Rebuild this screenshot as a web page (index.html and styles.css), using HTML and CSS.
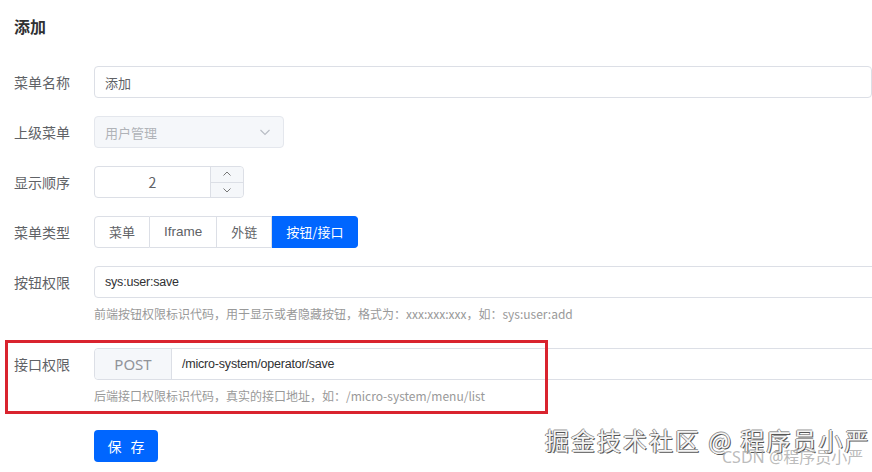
FILE: index.html
```html
<!DOCTYPE html>
<html lang="zh-CN">
<head>
    <meta charset="UTF-8">
    <title>添加</title>
    <link rel="stylesheet" href="styles.css">
</head>
<body>
    <div class="page">
        <h2 class="title">添加</h2>

        <form class="form">
            <div class="form-item">
                <label class="label">菜单名称</label>
                <div class="input wide"><span class="value">添加</span></div>
            </div>

            <div class="form-item">
                <label class="label">上级菜单</label>
                <div class="input select disabled">
                    <span class="value">用户管理</span>
                    <svg class="arrow" width="12" height="12" viewBox="0 0 12 12"><path d="M1.5 4 L6 8.5 L10.5 4" fill="none" stroke="#b8bcc4" stroke-width="1.1"/></svg>
                </div>
            </div>

            <div class="form-item">
                <label class="label">显示顺序</label>
                <div class="input number">
                    <span class="value">2</span>
                    <div class="spin">
                        <span class="spin-btn"><svg width="10" height="10" viewBox="0 0 10 10"><path d="M1.5 6.5 L5 3 L8.5 6.5" fill="none" stroke="#777" stroke-width="1"/></svg></span>
                        <span class="spin-btn"><svg width="10" height="10" viewBox="0 0 10 10"><path d="M1.5 3.5 L5 7 L8.5 3.5" fill="none" stroke="#777" stroke-width="1"/></svg></span>
                    </div>
                </div>
            </div>

            <div class="form-item">
                <label class="label">菜单类型</label>
                <div class="radio-group">
                    <span class="radio">菜单</span>
                    <span class="radio latin-radio">Iframe</span>
                    <span class="radio">外链</span>
                    <span class="radio active">按钮/接口</span>
                </div>
            </div>

            <div class="form-item has-help">
                <label class="label">按钮权限</label>
                <div class="field">
                    <div class="input wide"><span class="value latin">sys:user:save</span></div>
                    <div class="help">前端按钮权限标识代码，用于显示或者隐藏按钮，格式为：xxx:xxx:xxx，如：sys:user:add</div>
                </div>
            </div>

            <div class="form-item has-help marked">
                <label class="label">接口权限</label>
                <div class="field">
                    <div class="input wide group">
                        <span class="prepend">POST</span>
                        <span class="value latin">/micro-system/operator/save</span>
                    </div>
                    <div class="help">后端接口权限标识代码，真实的接口地址，如：/micro-system/menu/list</div>
                </div>
                <div class="mark"></div>
            </div>

            <div class="form-item">
                <span class="label"></span>
                <button type="button" class="btn-primary">保 存</button>
            </div>
        </form>

        <div class="watermark">掘金技术社区 @ 程序员小严</div>
        <div class="watermark-small">CSDN @程序员小严</div>
    </div>
</body>
</html>
```

FILE: styles.css
```css
body {
    margin: 0;
    background: #fff;
    font-family: "Noto Sans CJK SC", "Noto Sans", sans-serif;
    overflow: hidden;
}
.page {
    position: relative;
    width: 872px;
    height: 472px;
    padding: 14px 0 0 14px;
    box-sizing: border-box;
}
.title {
    margin: 0;
    font-size: 16px;
    line-height: 24px;
    font-weight: bold;
    color: #303133;
}
.form {
    margin-top: 28px;
}
.form-item {
    position: relative;
    display: flex;
    align-items: flex-start;
    margin-bottom: 18px;
}
.label {
    width: 80px;
    flex: none;
    font-size: 14px;
    line-height: 32px;
    color: #606266;
}
.field {
    display: flex;
    flex-direction: column;
}
.input {
    display: flex;
    align-items: center;
    height: 32px;
    box-sizing: border-box;
    border: 1px solid #dcdfe6;
    border-radius: 4px;
    background: #fff;
    font-size: 13px;
    color: #606266;
}
.input .value {
    padding: 0 10px;
}
.latin {
    font-family: "Liberation Sans", "Noto Sans CJK SC", sans-serif;
    font-size: 12.5px;
    letter-spacing: -0.2px;
    color: #303133;
}
.wide {
    width: 800px;
}
.select {
    width: 190px;
    justify-content: space-between;
}
.disabled {
    background: #f5f7fa;
    border-color: #e4e7ed;
    color: #b0b3b8;
}
.arrow {
    margin-right: 12px;
}
.number {
    width: 150px;
    justify-content: space-between;
}
.number .value {
    flex: 1;
    text-align: center;
    font-size: 14px;
    color: #606266;
}
.spin {
    display: flex;
    flex-direction: column;
    width: 32px;
    height: 100%;
    border-left: 1px solid #dcdfe6;
    background: #f5f7fa;
    border-radius: 0 4px 4px 0;
}
.spin-btn {
    flex: 1;
    display: flex;
    align-items: center;
    justify-content: center;
}
.spin-btn + .spin-btn {
    border-top: 1px solid #dcdfe6;
}
.radio-group {
    display: flex;
}
.radio {
    height: 30px;
    line-height: 30px;
    padding: 0 14px;
    border: 1px solid #dcdfe6;
    border-left: none;
    font-size: 13px;
    color: #606266;
}
.latin-radio {
    font-family: "Liberation Sans", sans-serif;
    font-size: 13.5px;
}
.radio:first-child {
    border-left: 1px solid #dcdfe6;
    border-radius: 4px 0 0 4px;
}
.radio:last-child {
    border-radius: 0 4px 4px 0;
}
.radio.active {
    background: #0066ff;
    border-color: #0066ff;
    color: #fff;
}
.help {
    height: 32px;
    line-height: 32px;
    font-size: 12px;
    color: #999;
}
.group .prepend {
    width: 76px;
    height: 100%;
    flex: none;
    display: flex;
    align-items: center;
    justify-content: center;
    background: #f5f7fa;
    border-right: 1px solid #dcdfe6;
    border-radius: 4px 0 0 4px;
    font-family: "Noto Sans", sans-serif;
    font-size: 15px;
    color: #909399;
}
.mark {
    position: absolute;
    left: -9px;
    top: -8px;
    width: 543px;
    height: 74px;
    border: 3px solid #d9232e;
    box-sizing: border-box;
}
.btn-primary {
    width: 64px;
    height: 32px;
    padding: 0 0 0 3px;
    border: none;
    border-radius: 4px;
    background: #0066ff;
    color: #fff;
    font-family: "Noto Sans CJK SC", sans-serif;
    font-size: 14px;
    letter-spacing: 3px;
}
.watermark {
    position: absolute;
    left: 545px;
    top: 425px;
    font-size: 24px;
    line-height: 30px;
    letter-spacing: 2px;
    color: #f4f4f4;
    text-shadow: 1px 1px 0 #555, -1px 0 0 #888, 0 -1px 0 #999;
    white-space: nowrap;
}
.watermark-small {
    position: absolute;
    left: 722px;
    top: 447px;
    font-family: "Noto Sans", "Noto Sans CJK SC", sans-serif;
    font-size: 16px;
    line-height: 20px;
    color: rgba(170, 170, 170, 0.8);
    white-space: nowrap;
}
```
